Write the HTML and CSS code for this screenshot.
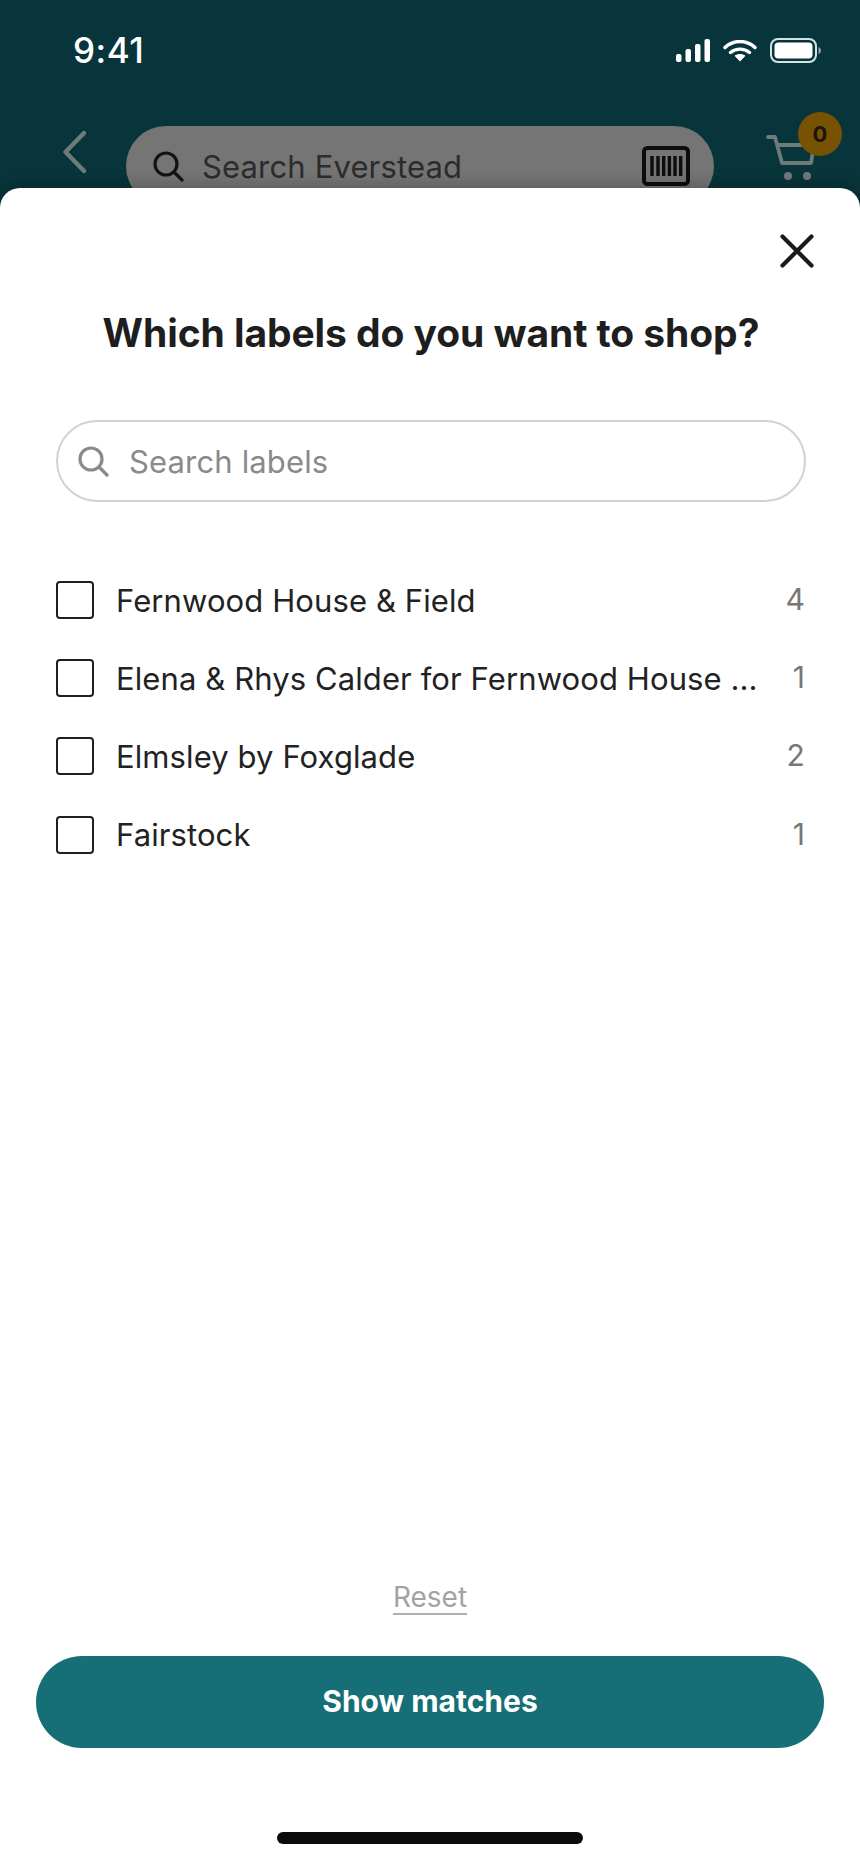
FILE: index.html
```html
<!DOCTYPE html>
<html lang="en">
<head>
    <meta charset="UTF-8">
    <meta name="viewport" content="width=device-width, initial-scale=1.0">
    <title>Which labels do you want to shop?</title>
    <link rel="stylesheet" href="styles.css">
</head>
<body>
    <div class="screen">
        <header class="top">
            <div class="status">
                <span class="time">9:41</span>
                <div class="status-icons">
                    <svg class="signal" width="34" height="23" viewBox="0 0 34 23">
                        <rect x="0" y="15" width="5.500" height="8" rx="2"/>
                        <rect x="9.500" y="10" width="5.500" height="13" rx="2"/>
                        <rect x="19" y="5" width="5.500" height="18" rx="2"/>
                        <rect x="28.500" y="0" width="5.500" height="23" rx="2"/>
                    </svg>
                    <svg class="wifi" width="34" height="22" viewBox="0 0 34 22">
                        <path d="M2 7.500C10.500 -0.500 23.500 -0.500 32 7.500M7.500 12.500C13 8 21 8 26.500 12.500" fill="none" stroke="#fff" stroke-width="3.400" stroke-linecap="round"/>
                        <path d="M11.500 15.800C15 13.400 19 13.400 22.500 15.800L17 21.500Z" fill="#fff"/>
                    </svg>
                    <svg class="battery" width="51" height="25" viewBox="0 0 51 25">
                        <rect x="1" y="1" width="45" height="23" rx="7" fill="none" stroke="#d5e2e4" stroke-width="2"/>
                        <rect x="4.500" y="4.500" width="38" height="16" rx="4" fill="#fff"/>
                        <path d="M48.500 9C50 9.500 51 11 51 12.500C51 14 50 15.500 48.500 16Z" fill="#8fa5a8"/>
                    </svg>
                </div>
            </div>
            <nav class="nav">
                <svg class="back" width="27" height="46" viewBox="0 0 27 46">
                    <path d="M23 3L4.500 22L23 41" fill="none" stroke="#6f7a7b" stroke-width="4.400" stroke-linecap="round" stroke-linejoin="round"/>
                </svg>
                <div class="store-search">
                    <svg width="32" height="32" viewBox="0 0 32 32">
                        <circle cx="14" cy="14" r="11" fill="none" stroke="#131313" stroke-width="3.200"/>
                        <path d="M22 22L30 30" stroke="#131313" stroke-width="3.200" stroke-linecap="round"/>
                    </svg>
                    <span class="store-text">Search Everstead</span>
                    <svg class="barcode" width="48" height="40" viewBox="0 0 48 40">
                        <rect x="2" y="2" width="44" height="36" rx="3.500" fill="none" stroke="#0d0d0d" stroke-width="4"/>
                        <path d="M10 10V30M16 10V30M21.700 10V30M27.400 10V30M33 10V30M38.700 10V30" stroke="#0d0d0d" stroke-width="3.400"/>
                    </svg>
                </div>
                <div class="cart">
                    <svg width="50" height="48" viewBox="0 0 50 48">
                        <path d="M2 2H9L16 28H45L48 10H11.500" fill="none" stroke="#6f7a7b" stroke-width="3.800" stroke-linecap="round" stroke-linejoin="round"/>
                        <circle cx="22" cy="41" r="4" fill="#6f7a7b"/>
                        <circle cx="41" cy="41" r="4" fill="#6f7a7b"/>
                    </svg>
                    <span class="badge">0</span>
                </div>
            </nav>
        </header>

        <main class="sheet">
            <div class="sheet-close">
                <svg width="34" height="34" viewBox="0 0 34 34">
                    <path d="M2.500 2.500L31.500 31.500M31.500 2.500L2.500 31.500" stroke="#1a1a1a" stroke-width="4.200" stroke-linecap="round"/>
                </svg>
            </div>
            <h1 class="sheet-title">Which labels do you want to shop?</h1>

            <div class="label-search">
                <svg width="32" height="32" viewBox="0 0 32 32">
                    <circle cx="14" cy="14" r="11" fill="none" stroke="#8a8a8a" stroke-width="3.200"/>
                    <path d="M22 22L30 30" stroke="#8a8a8a" stroke-width="3.200" stroke-linecap="round"/>
                </svg>
                <span>Search labels</span>
            </div>

            <ul class="labels">
                <li class="label-row">
                    <span class="check"></span>
                    <span class="label-name">Fernwood House &amp; Field</span>
                    <span class="label-count">4</span>
                </li>
                <li class="label-row">
                    <span class="check"></span>
                    <span class="label-name">Elena &amp; Rhys Calder for Fernwood House ...</span>
                    <span class="label-count">1</span>
                </li>
                <li class="label-row">
                    <span class="check"></span>
                    <span class="label-name">Elmsley by Foxglade</span>
                    <span class="label-count">2</span>
                </li>
                <li class="label-row">
                    <span class="check"></span>
                    <span class="label-name">Fairstock</span>
                    <span class="label-count">1</span>
                </li>
            </ul>

            <div class="sheet-foot">
                <a class="reset">Reset</a>
                <button class="show-btn" type="button">Show matches</button>
                <div class="home-bar"></div>
            </div>
        </main>
    </div>
</body>
</html>
```

FILE: styles.css
```css
* {
    box-sizing: border-box;
}
body {
    margin: 0;
    font-family: Inter, "Liberation Sans", sans-serif;
    background-color: #fff;
}
.screen {
    width: 860px;
    height: 1864px;
    display: flex;
    flex-direction: column;
    overflow: hidden;
    background-color: #08353b;
}
.top {
    height: 188px;
    flex-shrink: 0;
    overflow: hidden;
    color: #fff;
}
.status {
    height: 126px;
    padding: 28px 39px 0 73px;
    display: flex;
    justify-content: space-between;
    align-items: flex-start;
}
.time {
    font-size: 35px;
    font-weight: 500;
    line-height: 44px;
    letter-spacing: 0.500px;
}
.status-icons {
    display: flex;
    align-items: center;
    gap: 13px;
    padding-top: 10px;
}
.signal {
    fill: #fff;
}
.nav {
    display: flex;
    align-items: flex-start;
    padding-left: 61px;
}
.back {
    margin-right: 38px;
    margin-top: 4px;
}
.store-search {
    width: 588px;
    height: 80px;
    flex-shrink: 0;
    border-radius: 40px;
    background-color: #757575;
    display: flex;
    align-items: center;
    padding: 0 24px 0 26px;
    color: #2c2c2c;
    font-size: 31px;
    letter-spacing: 0.150px;
}
.store-text {
    margin-left: 18px;
    flex: 1;
}
.cart {
    position: relative;
    margin-left: 52px;
    width: 50px;
    height: 60px;
    padding-top: 9px;
}
.badge {
    position: absolute;
    left: 32px;
    top: -14px;
    width: 44px;
    height: 44px;
    border-radius: 50%;
    background-color: #775203;
    color: #1b1608;
    font-size: 22px;
    font-weight: 700;
    line-height: 44px;
    text-align: center;
}
.sheet {
    flex: 1;
    position: relative;
    display: flex;
    flex-direction: column;
    background-color: #fff;
    border-radius: 20px 20px 0 0;
    box-shadow: 0 -4px 14px rgba(0, 0, 0, 0.22);
    padding: 0 54px 0 56px;
}
.sheet-close {
    display: flex;
    justify-content: flex-end;
    padding: 46px 0 0;
    margin-right: -8px;
}
.sheet-close svg {
    display: block;
}
.sheet-title {
    margin: 40px 0 0;
    font-size: 39px;
    font-weight: 700;
    line-height: 50px;
    letter-spacing: -0.080px;
    color: #1e1e1e;
    text-align: center;
    white-space: nowrap;
}
.label-search {
    margin-top: 62px;
    height: 82px;
    border: 2px solid #d2d2d2;
    border-radius: 41px;
    display: flex;
    align-items: center;
    gap: 20px;
    padding-left: 19px;
    font-size: 31px;
    letter-spacing: 0.150px;
    color: #8a8a8a;
}
.labels {
    list-style: none;
    margin: 59px 0 0;
    padding: 0;
}
.label-row {
    height: 78.200px;
    display: flex;
    align-items: center;
    font-size: 31px;
    letter-spacing: 0.100px;
    color: #222;
}
.check {
    width: 38px;
    height: 38px;
    flex-shrink: 0;
    border: 2px solid #1f1f1f;
    border-radius: 4px;
    margin-right: 22px;
}
.label-name {
    white-space: nowrap;
}
.label-count {
    flex: 1;
    text-align: right;
    color: #777;
    font-size: 30px;
    padding: 0 1px 2px 0;
}
.sheet-foot {
    margin-top: auto;
    margin-left: -20px;
    margin-right: -18px;
    display: flex;
    flex-direction: column;
    align-items: center;
}
.reset {
    font-size: 28px;
    line-height: 32px;
    color: #a3a3a3;
    border-bottom: 2px solid #b0b0b0;
}
.show-btn {
    width: 788px;
    height: 92px;
    margin-top: 41px;
    padding-bottom: 4px;
    border: none;
    border-radius: 46px;
    background-color: #166f76;
    color: #fff;
    font-family: inherit;
    font-size: 30px;
    font-weight: 700;
}
.home-bar {
    width: 306px;
    height: 12px;
    margin: 84px 0 20px;
    border-radius: 6px;
    background-color: #0b0b0b;
}
```
